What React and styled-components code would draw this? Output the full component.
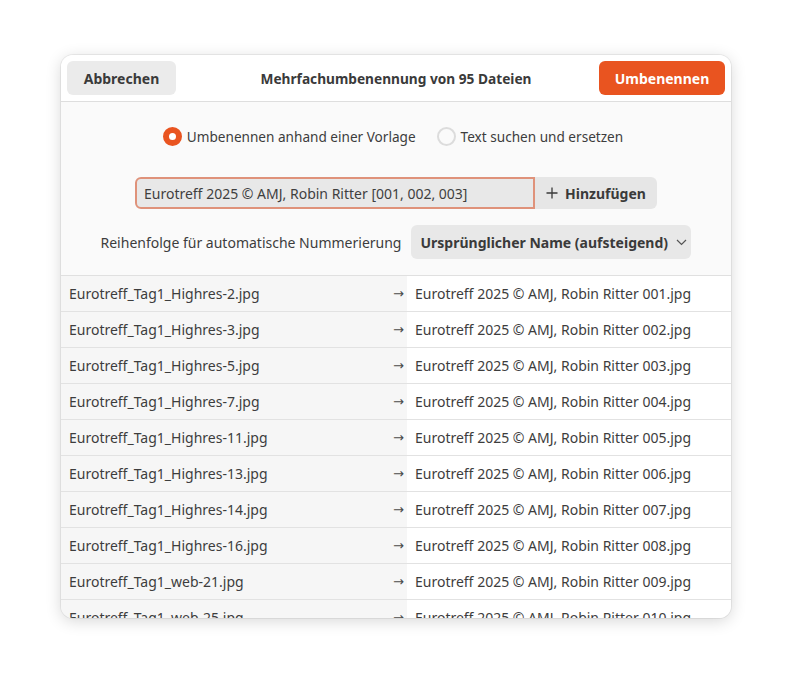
import React from "react";
import styled, { createGlobalStyle } from "styled-components";

const Global = createGlobalStyle`
  html, body { margin: 0; padding: 0; background: #ffffff; }
  body { font-family: "Noto Sans", "Open Sans", sans-serif; color: #3d3d3d; }
  * { box-sizing: border-box; }
`;

const Page = styled.div`
  display: flex;
  justify-content: center;
  padding-top: 55px;
  width: 792px;
  height: 685px;
`;

const Dialog = styled.div`
  width: 670px;
  height: 563px;
  border-radius: 12px;
  overflow: hidden;
  background: #fafafa;
  box-shadow: 0 3px 16px rgba(0, 0, 0, 0.16), 0 0 0 1px rgba(0, 0, 0, 0.06);
  display: flex;
  flex-direction: column;
`;

const Header = styled.div`
  height: 47px;
  flex: none;
  background: #ffffff;
  border-bottom: 1px solid #dedede;
  padding: 6px 6px 0 6px;
  display: grid;
  grid-template-columns: 1fr auto 1fr;
  align-items: start;
`;

const Title = styled.div`
  height: 34px;
  display: flex;
  align-items: center;
  font-weight: 700;
  font-size: 13.7px;
  color: #3a3a3a;
`;

const HeaderButton = styled.button`
  height: 34px;
  width: ${(p) => p.$w}px;
  padding: 0;
  border: none;
  border-radius: 6px;
  font-family: inherit;
  font-weight: 700;
  font-size: 14px;
  background: ${(p) => (p.$accent ? "#e95420" : "#ebebeb")};
  color: ${(p) => (p.$accent ? "#ffffff" : "#3a3a3a")};
  justify-self: ${(p) => (p.$accent ? "end" : "start")};
`;

const Body = styled.div`
  flex: none;
  padding-top: 24px;
  display: flex;
  flex-direction: column;
  align-items: center;
`;

const RadioRow = styled.div`
  height: 20px;
  display: flex;
  align-items: center;
  gap: 21px;
  margin-right: 6px;
`;

const RadioOption = styled.label`
  display: flex;
  align-items: center;
  gap: 5px;
  font-size: 13.6px;
  color: #3d3d3d;
`;

const RadioDot = styled.span`
  width: 19px;
  height: 19px;
  border-radius: 50%;
  flex: none;
  background: ${(p) => (p.$checked ? "#ffffff" : "#fafafa")};
  border: ${(p) => (p.$checked ? "6px solid #e95420" : "2px solid #dcdcdc")};
`;

const TemplateRow = styled.div`
  margin-top: 31px;
  height: 32px;
  display: flex;
`;

const TemplateInput = styled.div`
  width: 400px;
  height: 32px;
  border: 2px solid #df927a;
  border-radius: 6px 0 0 6px;
  background: #e8e8e8;
  padding-left: 7px;
  display: flex;
  align-items: center;
  font-size: 14px;
  color: #3f3f3f;
  white-space: nowrap;
  overflow: hidden;
`;

const AddButton = styled.button`
  width: 122px;
  height: 32px;
  border: none;
  border-radius: 0 6px 6px 0;
  background: #e6e6e6;
  font-family: inherit;
  font-weight: 700;
  font-size: 14px;
  color: #3a3a3a;
  display: flex;
  align-items: center;
  justify-content: center;
  gap: 7px;
  padding: 0;
`;

const OrderRow = styled.div`
  margin-top: 16px;
  height: 34px;
  display: flex;
  align-items: center;
  gap: 10px;
`;

const OrderLabel = styled.span`
  font-size: 14px;
  color: #3d3d3d;
`;

const Dropdown = styled.button`
  width: 280px;
  height: 34px;
  border: none;
  border-radius: 6px;
  background: #e8e8e8;
  font-family: inherit;
  font-weight: 700;
  font-size: 14px;
  color: #3a3a3a;
  display: flex;
  align-items: center;
  gap: 8px;
  padding: 0 0 0 9px;
`;

const List = styled.div`
  margin-top: 16px;
  border-top: 1px solid #e0e0e0;
  flex: 1;
  overflow: hidden;
`;

const Row = styled.div`
  display: grid;
  grid-template-columns: 346px 1fr;
  height: 36px;
  border-bottom: 1px solid #e2e2e2;
`;

const OldName = styled.div`
  background: #f6f6f6;
  display: flex;
  align-items: center;
  justify-content: space-between;
  padding: 0 3px 1px 8px;
  font-size: 14px;
  color: #3d3d3d;
  white-space: nowrap;
`;

const Arrow = styled.span`
  font-family: "DejaVu Sans", sans-serif;
  font-size: 13px;
  line-height: 1;
  color: #4a4a4a;
  padding-top: 1px;
`;

const NewName = styled.div`
  background: #ffffff;
  display: flex;
  align-items: center;
  padding: 0 0 1px 8px;
  font-size: 14px;
  color: #3d3d3d;
  white-space: nowrap;
`;

const files = [
  "Eurotreff_Tag1_Highres-2.jpg",
  "Eurotreff_Tag1_Highres-3.jpg",
  "Eurotreff_Tag1_Highres-5.jpg",
  "Eurotreff_Tag1_Highres-7.jpg",
  "Eurotreff_Tag1_Highres-11.jpg",
  "Eurotreff_Tag1_Highres-13.jpg",
  "Eurotreff_Tag1_Highres-14.jpg",
  "Eurotreff_Tag1_Highres-16.jpg",
  "Eurotreff_Tag1_web-21.jpg",
  "Eurotreff_Tag1_web-25.jpg",
];

const Plus = () => (
  <svg width="12" height="12" viewBox="0 0 12 12">
    <path d="M6 0.5v11M0.5 6h11" stroke="#3a3a3a" strokeWidth="1.3" fill="none" />
  </svg>
);

const Chevron = () => (
  <svg width="11" height="7" viewBox="0 0 11 7">
    <path d="M1 1l4.5 4.5L10 1" stroke="#555" strokeWidth="1.2" fill="none" />
  </svg>
);

export default function App() {
  return (
    <>
      <Global />
      <Page>
        <Dialog>
          <Header>
            <HeaderButton $w={109}>Abbrechen</HeaderButton>
            <Title>Mehrfachumbenennung von 95 Dateien</Title>
            <HeaderButton $accent $w={126}>Umbenennen</HeaderButton>
          </Header>
          <Body>
            <RadioRow>
              <RadioOption>
                <RadioDot $checked />
                Umbenennen anhand einer Vorlage
              </RadioOption>
              <RadioOption>
                <RadioDot />
                Text suchen und ersetzen
              </RadioOption>
            </RadioRow>
            <TemplateRow>
              <TemplateInput>Eurotreff 2025 © AMJ, Robin Ritter [001, 002, 003]</TemplateInput>
              <AddButton>
                <Plus />
                Hinzufügen
              </AddButton>
            </TemplateRow>
            <OrderRow>
              <OrderLabel>Reihenfolge für automatische Nummerierung</OrderLabel>
              <Dropdown>
                Ursprünglicher Name (aufsteigend)
                <Chevron />
              </Dropdown>
            </OrderRow>
          </Body>
          <List>
            {files.map((f, i) => (
              <Row key={f}>
                <OldName>
                  {f}
                  <Arrow>→</Arrow>
                </OldName>
                <NewName>
                  Eurotreff 2025 © AMJ, Robin Ritter {String(i + 1).padStart(3, "0")}.jpg
                </NewName>
              </Row>
            ))}
          </List>
        </Dialog>
      </Page>
    </>
  );
}
